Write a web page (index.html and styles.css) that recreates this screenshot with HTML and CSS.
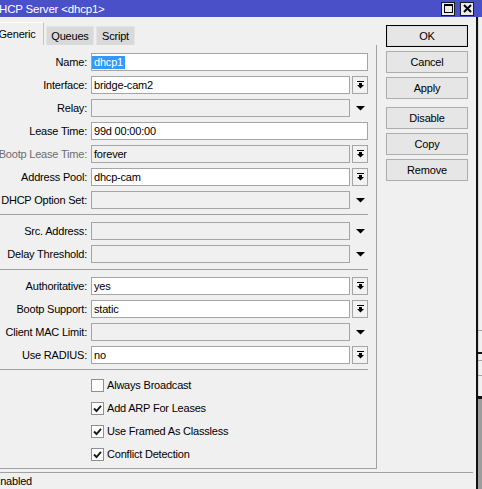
FILE: index.html
```html
<!DOCTYPE html>
<html>
<head>
<meta charset="utf-8">
<title>DHCP Server</title>
<link rel="stylesheet" href="styles.css">
</head>
<body>
<div class="titlebar">
  <span class="title">DHCP Server &lt;dhcp1&gt;</span>
  <div class="tb-buttons">
    <span class="tb-btn"><svg width="9" height="9" viewBox="0 0 9 9"><rect x="0.5" y="0.5" width="8" height="8" fill="none" stroke="#000"/><rect x="0" y="0" width="9" height="2" fill="#000"/></svg></span>
    <span class="tb-btn"><svg width="9" height="9" viewBox="0 0 9 9"><path d="M1 1L8 8M8 1L1 8" stroke="#000" stroke-width="2"/></svg></span>
  </div>
</div>
<div class="below">
  <div class="window">
    <div class="content">
      <div class="left">
        <div class="tabs">
          <div class="tab active t-generic">Generic</div>
          <div class="tab t-queues">Queues</div>
          <div class="tab t-script">Script</div>
        </div>
        <div class="panel">
          <div class="section">
            <div class="row"><div class="label">Name:</div><div class="field"><div class="input white nopad"><span class="sel">dhcp1</span></div></div></div>
            <div class="row"><div class="label">Interface:</div><div class="field"><div class="input white">bridge-cam2</div><div class="combo"><svg width="7" height="8" viewBox="0 0 7 8"><rect x="0" y="0" width="7" height="1"/><rect x="2" y="2" width="3" height="2"/><path d="M0 4H7L3.5 7.5Z"/></svg></div></div></div>
            <div class="row"><div class="label">Relay:</div><div class="field"><div class="input"></div><div class="drop"><svg width="9" height="5" viewBox="0 0 9 5"><path d="M0 0H9L4.5 4.5Z"/></svg></div></div></div>
            <div class="row"><div class="label">Lease Time:</div><div class="field"><div class="input white">99d 00:00:00</div></div></div>
            <div class="row"><div class="label dim">Bootp Lease Time:</div><div class="field"><div class="input">forever</div><div class="combo"><svg width="7" height="8" viewBox="0 0 7 8"><rect x="0" y="0" width="7" height="1"/><rect x="2" y="2" width="3" height="2"/><path d="M0 4H7L3.5 7.5Z"/></svg></div></div></div>
            <div class="row"><div class="label">Address Pool:</div><div class="field"><div class="input white">dhcp-cam</div><div class="combo"><svg width="7" height="8" viewBox="0 0 7 8"><rect x="0" y="0" width="7" height="1"/><rect x="2" y="2" width="3" height="2"/><path d="M0 4H7L3.5 7.5Z"/></svg></div></div></div>
            <div class="row"><div class="label">DHCP Option Set:</div><div class="field"><div class="input"></div><div class="drop"><svg width="9" height="5" viewBox="0 0 9 5"><path d="M0 0H9L4.5 4.5Z"/></svg></div></div></div>
          </div>
          <div class="sep"></div>
          <div class="section">
            <div class="row"><div class="label">Src. Address:</div><div class="field"><div class="input"></div><div class="drop"><svg width="9" height="5" viewBox="0 0 9 5"><path d="M0 0H9L4.5 4.5Z"/></svg></div></div></div>
            <div class="row"><div class="label">Delay Threshold:</div><div class="field"><div class="input"></div><div class="drop"><svg width="9" height="5" viewBox="0 0 9 5"><path d="M0 0H9L4.5 4.5Z"/></svg></div></div></div>
          </div>
          <div class="sep sep2"></div>
          <div class="section">
            <div class="row"><div class="label">Authoritative:</div><div class="field"><div class="input white">yes</div><div class="combo"><svg width="7" height="8" viewBox="0 0 7 8"><rect x="0" y="0" width="7" height="1"/><rect x="2" y="2" width="3" height="2"/><path d="M0 4H7L3.5 7.5Z"/></svg></div></div></div>
            <div class="row"><div class="label">Bootp Support:</div><div class="field"><div class="input white">static</div><div class="combo"><svg width="7" height="8" viewBox="0 0 7 8"><rect x="0" y="0" width="7" height="1"/><rect x="2" y="2" width="3" height="2"/><path d="M0 4H7L3.5 7.5Z"/></svg></div></div></div>
            <div class="row"><div class="label">Client MAC Limit:</div><div class="field"><div class="input"></div><div class="drop"><svg width="9" height="5" viewBox="0 0 9 5"><path d="M0 0H9L4.5 4.5Z"/></svg></div></div></div>
            <div class="row"><div class="label">Use RADIUS:</div><div class="field"><div class="input white">no</div><div class="combo"><svg width="7" height="8" viewBox="0 0 7 8"><rect x="0" y="0" width="7" height="1"/><rect x="2" y="2" width="3" height="2"/><path d="M0 4H7L3.5 7.5Z"/></svg></div></div></div>
          </div>
          <div class="sep sep3"></div>
          <div class="section checks">
            <div class="check-row"><span class="cb"></span><span>Always Broadcast</span></div>
            <div class="check-row"><span class="cb"><svg width="9" height="9" viewBox="0 0 9 9"><path d="M1 4.5L3.5 7L8 1.8" fill="none" stroke="#1a1a1a" stroke-width="1.9"/></svg></span><span>Add ARP For Leases</span></div>
            <div class="check-row"><span class="cb"><svg width="9" height="9" viewBox="0 0 9 9"><path d="M1 4.5L3.5 7L8 1.8" fill="none" stroke="#1a1a1a" stroke-width="1.9"/></svg></span><span>Use Framed As Classless</span></div>
            <div class="check-row"><span class="cb"><svg width="9" height="9" viewBox="0 0 9 9"><path d="M1 4.5L3.5 7L8 1.8" fill="none" stroke="#1a1a1a" stroke-width="1.9"/></svg></span><span>Conflict Detection</span></div>
          </div>
        </div>
      </div>
      <div class="buttons">
        <div class="btn default">OK</div>
        <div class="btn">Cancel</div>
        <div class="btn">Apply</div>
        <div class="btn spaced">Disable</div>
        <div class="btn">Copy</div>
        <div class="btn">Remove</div>
      </div>
    </div>
    <div class="status">Enabled</div>
  </div>
  <div class="edge"></div>
  <div class="outside">
    <div class="o-top"></div>
    <div class="o-line"></div>
    <div class="o-gap g1"></div>
    <div class="o-dark"></div>
    <div class="o-gap g2"></div>
    <div class="o-line"></div>
    <div class="o-gap g3"></div>
    <div class="o-line"></div>
    <div class="o-gap g4"></div>
    <div class="o-dark thick"></div>
    <div class="o-rest"></div>
  </div>
</div>
</body>
</html>
```

FILE: styles.css
```css
* { box-sizing: border-box; }
html, body { margin: 0; padding: 0; }
body {
  width: 482px;
  height: 489px;
  overflow: hidden;
  background: #f0f0f0;
  font-family: "Liberation Sans", Arial, sans-serif;
  font-size: 11px;
  letter-spacing: -0.2px;
  color: #000;
}

/* title bar */
.titlebar {
  height: 17px;
  background: #4a50c8;
  color: #fff;
  display: flex;
  align-items: center;
  justify-content: space-between;
  padding-right: 8px;
}
.title { margin-left: -9px; white-space: nowrap; font-size: 11.5px; }
.tb-buttons { display: flex; gap: 5px; }
.tb-btn {
  width: 14px;
  height: 14px;
  border: 1px solid #1a1a1a;
  background: #ececec;
  display: flex;
  align-items: center;
  justify-content: center;
}

/* window area */
.below { display: flex; height: 472px; margin-left: -8px; }
.window { width: 484px; display: flex; flex-direction: column; }
.content { height: 455px; display: flex; }
.left { width: 385px; display: flex; flex-direction: column; }

/* tabs */
.tabs {
  height: 28px;
  display: flex;
  align-items: flex-end;
  gap: 2px;
  padding-left: 2px;
}
.tab {
  height: 19px;
  display: flex;
  align-items: center;
  justify-content: center;
  background: #d9d9d9;
  border: 1px solid #e4e4e4;
  border-bottom: none;
  white-space: nowrap;
}
.tab.active {
  height: 23px;
  background: #f0f0f0;
  border-color: #ffffff #c4c4c4 transparent #ffffff;
  padding-right: 4px;
}
.t-generic { width: 50px; }
.t-queues { width: 48px; }
.t-script { width: 39px; }

/* panel */
.panel {
  height: 424px;
  border-right: 1px solid #a0a0a0;
  border-bottom: 1px solid #a0a0a0;
  padding: 8px 8px 0 0;
}
.section { display: flex; flex-direction: column; gap: 5px; }
.row { display: flex; align-items: center; height: 18px; gap: 4px; }
.label {
  width: 95px;
  flex: none;
  display: flex;
  justify-content: flex-end;
  white-space: nowrap;
}
.label.dim { color: #6d6d6d; }
.field { flex: 1; display: flex; gap: 2px; height: 18px; }
.input {
  flex: 1;
  border: 1px solid #a5a5a5;
  background: #f0f0f0;
  padding-left: 2px;
  display: flex;
  align-items: center;
  white-space: nowrap;
}
.input.white { background: #fff; }
.input.nopad { padding-left: 0; }
.sel {
  background: #3399ff;
  color: #fff;
  padding: 0 2px;
  line-height: 13px;
}
.combo {
  width: 16px;
  height: 18px;
  flex: none;
  border: 1px solid #a5a5a5;
  background: #f2f2f2;
  display: flex;
  align-items: center;
  justify-content: center;
}
.drop {
  width: 16px;
  height: 18px;
  flex: none;
  display: flex;
  align-items: center;
  justify-content: center;
}
.sep { height: 1px; background: #a0a0a0; margin: 5px 0 7px 0; }
.sep2 { margin-top: 6px; }
.sep3 { margin-top: 5px; margin-bottom: 6px; }

.checks { padding-left: 99px; }
.check-row { height: 18px; display: flex; align-items: center; gap: 3px; }
.cb {
  width: 13px;
  height: 13px;
  border: 1px solid #8e8f8f;
  background: #fff;
  display: flex;
  align-items: center;
  justify-content: center;
}

/* buttons */
.buttons {
  padding: 8px 0 0 9px;
  display: flex;
  flex-direction: column;
  gap: 4px;
}
.btn {
  width: 82px;
  height: 22px;
  border: 1px solid #adadad;
  background: #e6e6e6;
  display: flex;
  align-items: center;
  justify-content: center;
}
.btn.default { border-color: #000; box-shadow: inset 0 0 0 1px #dcdcdc; }
.btn.spaced { margin-top: 4px; }

/* status bar */
.status {
  height: 17px;
  border-top: 1px solid #a0a0a0;
  margin-right: 3px;
  padding-left: 1px;
  line-height: 16px;
  white-space: nowrap;
}

/* edge of the window and what lies beyond */
.edge { width: 2px; background: #111; }
.outside { width: 4px; display: flex; flex-direction: column; }
.o-top { height: 313px; border-left: 1px solid #d8d8d8; }
.o-line { height: 1px; background: #a0a0a0; }
.o-dark { height: 2px; background: #111; }
.o-dark.thick { height: 3px; }
.o-gap { border-left: 1px solid #d8d8d8; }
.g1 { height: 21px; }
.g2 { height: 6px; }
.g3 { height: 14px; }
.g4 { height: 20px; }
.o-rest { flex: 1; background: #9d9d9d; }
```
